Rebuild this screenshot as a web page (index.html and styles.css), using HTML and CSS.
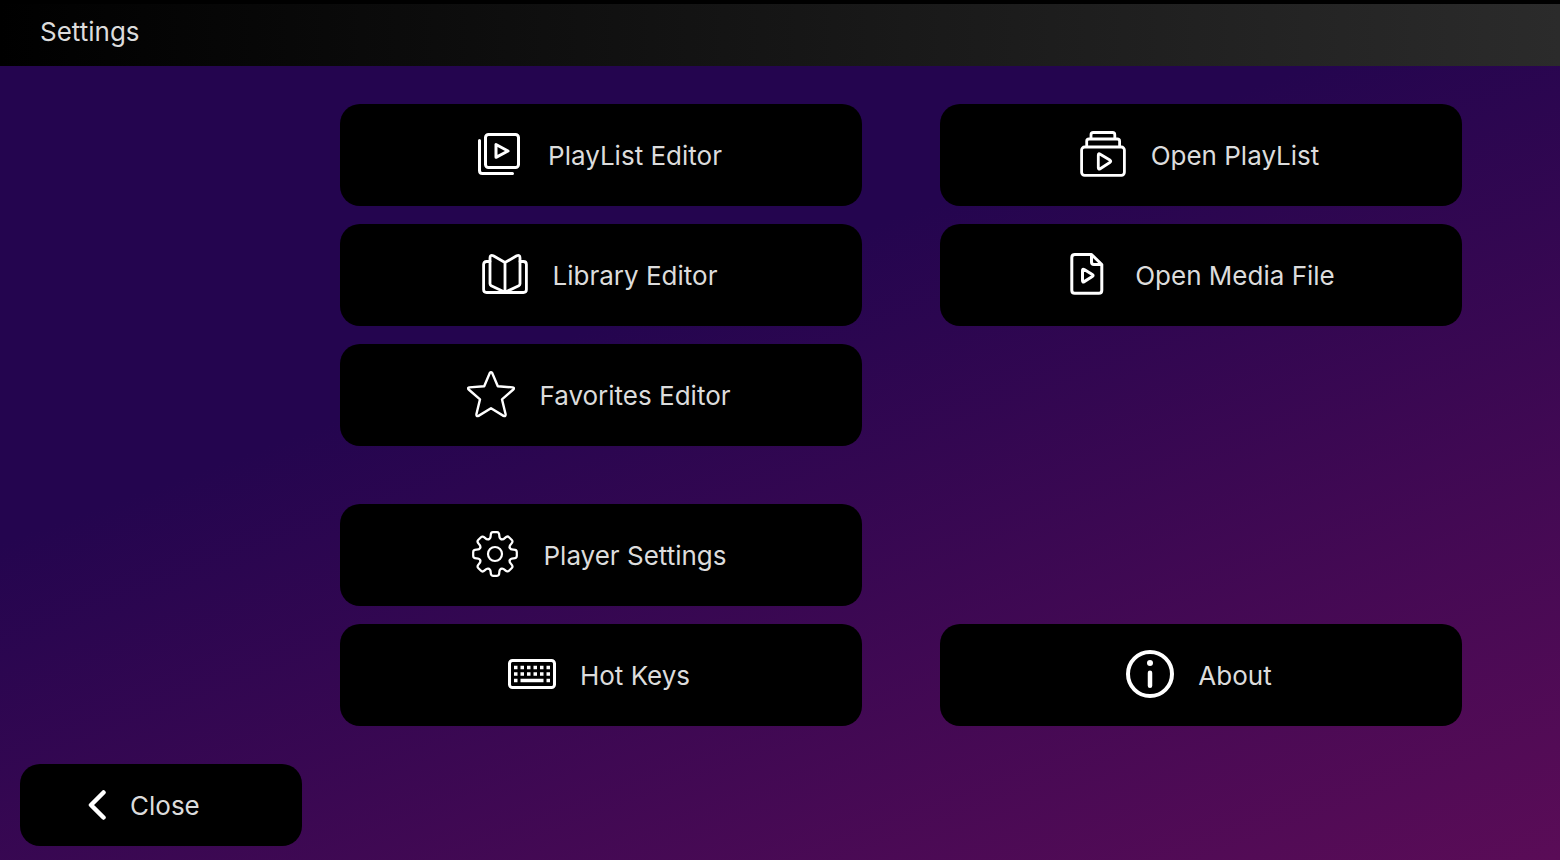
FILE: index.html
```html
<!DOCTYPE html>
<html lang="en">
<head>
<meta charset="utf-8">
<meta name="viewport" content="width=device-width, initial-scale=1">
<title>Settings</title>
<link rel="stylesheet" href="styles.css">
</head>
<body>
<div class="page">
  <header class="titlebar"><h1 class="title">Settings</h1></header>
  <main class="menu">
    <div class="group">
      <button class="tile" type="button">
        <svg class="icon" viewBox="0 0 48 48" stroke-width="3" aria-hidden="true"><rect x="9.5" y="4.5" width="33" height="33" rx="3"/><path d="M3.5 10.5V40.5q0 3 3 3H36.5M20 14.5V27.3L32 21Z"/></svg>
        <span>PlayList Editor</span>
      </button>
      <button class="tile" type="button">
        <svg class="icon" viewBox="0 0 48 48" stroke-width="2.8" aria-hidden="true"><rect x="2.6" y="17" width="42.8" height="28.3" rx="3"/><path d="M7.7 16.5V11.300q0-2.300 2.300-2.300H38.300q2.300 0 2.300 2.300V16.500M12 8.500V4.800q0-2.300 2.300-2.300H33.500q2.300 0 2.300 2.300V8.500"/><path d="M19.300 25.200q0-2.200 1.900-1L30.800 30q1.900 1.300 0 2.500L21.200 38.700q-1.900 1.200-1.900-1Z"/></svg>
        <span>Open PlayList</span>
      </button>
      <button class="tile" type="button">
        <svg class="icon" viewBox="0 0 48 48" stroke-width="2.8" aria-hidden="true"><path d="M24 12.500 12.300 5.800Q9 4.400 9 8V33.800q0 1.200 1.200 1.900L24 42.300 37.800 35.700q1.200-.7 1.200-1.900V8Q39 4.400 35.700 5.800ZM24 12.500V42"/><path d="M9 11.500H5.600Q2.600 11.500 2.600 14.500V39.500q0 3 3 3H42.400q3 0 3-3V14.500q0-3-3-3H39"/></svg>
        <span>Library Editor</span>
      </button>
      <button class="tile" type="button">
        <svg class="icon" viewBox="0 0 48 48" stroke-width="3" aria-hidden="true"><path d="M28.500 4.500H11.800q-3 0-3 3V40.200q0 3 3 3H35.800q3 0 3-3V14.500ZM28.500 4.500V12q0 2.500 2.500 2.500H38.500"/><path d="M19.500 20.500q0-2 1.700-1L29.300 24.600q1.600 1 0 2L21.200 31.600q-1.700 1-1.700-1Z"/></svg>
        <span>Open Media File</span>
      </button>
      <button class="tile" type="button">
        <svg class="icon" viewBox="0 0 48 48" stroke-width="2.400" aria-hidden="true"><path d="M22.800 3Q24 1.300 25.200 3L30.800 16.300 45.700 17.400Q48 18 46.300 19.500L35 29.400 38.600 44.300Q38.700 46.800 36.500 45.900L24 38.300 11.500 45.900Q9.300 46.800 9.400 44.300L13 29.400 1.700 19.500Q0 18 2.300 17.400L17.200 16.300Z"/></svg>
        <span>Favorites Editor</span>
      </button>
    </div>
    <div class="group">
      <button class="tile first" type="button">
        <svg class="icon" viewBox="-24 -24 48 48" stroke-width="2.200" aria-hidden="true">
          <defs><path id="tooth" d="M-6.100-14.800Q-4.300-15.500-4.300-18.500Q-4.300-21.800-2-21.800H2Q4.300-21.800 4.300-18.500Q4.300-15.500 6.100-14.800"/></defs>
          <circle r="7"/>
          <use href="#tooth"/><use href="#tooth" transform="rotate(45)"/><use href="#tooth" transform="rotate(90)"/><use href="#tooth" transform="rotate(135)"/><use href="#tooth" transform="rotate(180)"/><use href="#tooth" transform="rotate(225)"/><use href="#tooth" transform="rotate(270)"/><use href="#tooth" transform="rotate(315)"/>
        </svg>
        <span>Player Settings</span>
      </button>
      <button class="tile first" type="button">
        <svg class="icon" viewBox="0 0 48 48" stroke-width="3" aria-hidden="true"><rect x="1.500" y="10.500" width="45" height="27" rx="3"/><path stroke-width="3.500" stroke-linecap="butt" d="M6 17.600h3.500m3 0h3.500m3 0h3.500m3 0h3.500m3 0h3.500m3 0h3.500M6 24h3.500m3 0h3.500m3 0h3.500m3 0h3.500m3 0h3.500m3 0h3.500M6 30.400h3.500m3 0h23m3 0h3.500"/></svg>
        <span>Hot Keys</span>
      </button>
      <button class="tile" type="button">
        <svg class="icon" viewBox="0 0 48 48" stroke-width="4" aria-hidden="true"><circle cx="24" cy="24" r="22"/><circle class="dot" cx="24" cy="13" r="3"/><path stroke-width="4.500" d="M24 22.700V35.700"/></svg>
        <span>About</span>
      </button>
    </div>
  </main>
  <footer class="footer">
    <button class="close" type="button">
      <svg class="chevron" viewBox="0 0 18 30" stroke-width="4.500" aria-hidden="true"><path d="M15.500 2.500 3 15 15.500 27.500"/></svg>
      <span>Close</span>
    </button>
  </footer>
</div>
</body>
</html>
```
FILE: styles.css
```css
* { box-sizing: border-box; }

body {
  margin: 0;
  font-family: Inter, "Liberation Sans", sans-serif;
  font-size: 26px;
  line-height: 32px;
  color: #dcdcdc;
}

.page {
  display: flex;
  flex-direction: column;
  min-height: 100vh;
  background: linear-gradient(160deg, #24054f 38%, #5a0c57 100%);
}

.titlebar {
  padding: 12px 40px 18px;
  border-top: 4px solid #000;
  background: linear-gradient(90deg, #000, #2b2b2b);
}

.title {
  margin: 0;
  font-size: 26px;
  font-weight: 400;
}

.menu {
  display: flex;
  flex-direction: column;
  gap: 58px;
  padding: 38px 98px 38px 340px;
}

.group {
  display: grid;
  grid-template-columns: 1fr 1fr;
  gap: 18px 78px;
}

.tile,
.close {
  display: flex;
  align-items: center;
  gap: 24px;
  border: 0;
  border-radius: 20px;
  background: #000;
  color: inherit;
  font: inherit;
  white-space: nowrap;
  cursor: pointer;
}

.tile {
  justify-content: center;
  padding: 26px 4px 28px 0;
}

.first { grid-column: 1; }

.icon,
.chevron {
  flex: none;
  fill: none;
  stroke: #fff;
  stroke-linecap: round;
  stroke-linejoin: round;
}

.icon {
  width: 48px;
  height: 48px;
}

.dot {
  fill: #fff;
  stroke: none;
}

.chevron {
  width: 18px;
  height: 30px;
}

.tile span { padding-top: 4px; }

.close span { padding-top: 2px; }

.footer {
  padding: 0 20px 14px;
}

.close {
  width: 282px;
  padding: 24px 68px;
}
```
